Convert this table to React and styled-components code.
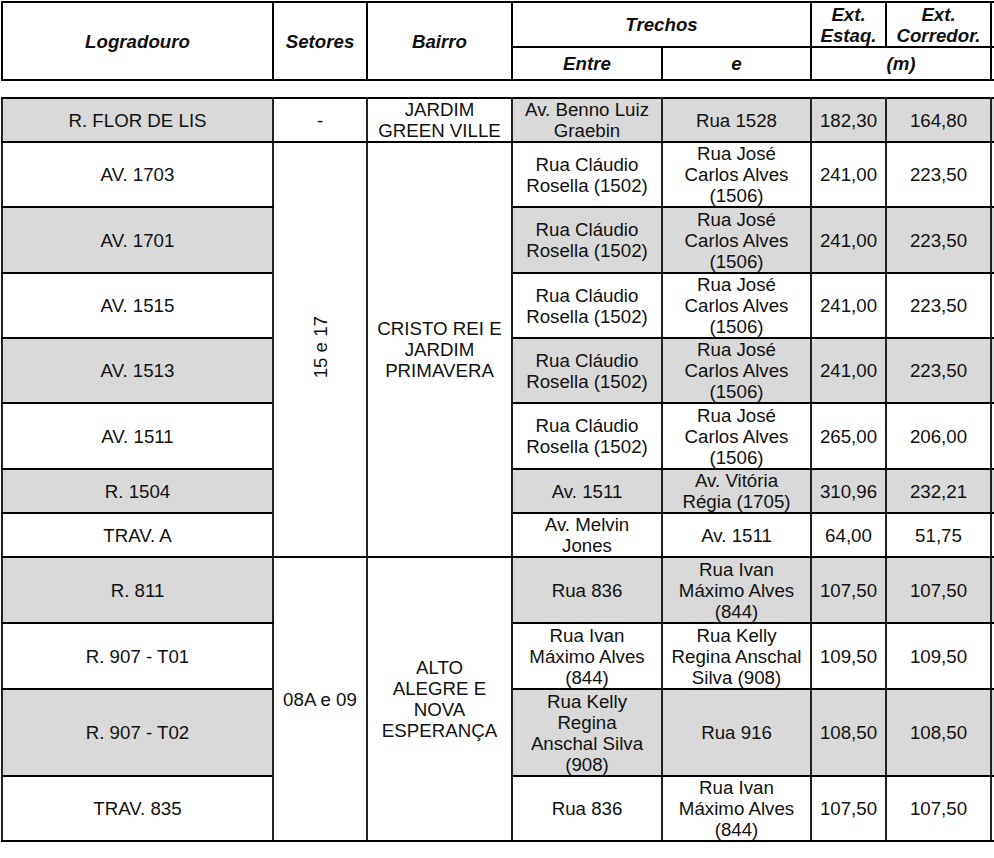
import React from 'react';
import styled, { createGlobalStyle } from 'styled-components';

const GlobalStyle = createGlobalStyle`
  html, body {
    margin: 0;
    padding: 0;
    background: #ffffff;
    overflow: hidden;
  }
  body {
    font-family: "Liberation Sans", Arial, sans-serif;
    color: #111111;
  }
`;

const Page = styled.div`
  width: 994px;
  height: 858px;
  overflow: hidden;
  box-sizing: border-box;
  padding: 1px 0 0 1px;
  display: flex;
  flex-direction: column;
  gap: 16px;
`;

const Table = styled.table`
  border-collapse: collapse;
  table-layout: fixed;
  width: 1048px;
  font-size: 18.7px;
  line-height: 21px;
  flex: none;
`;

const Row = styled.tr`
  height: ${(p) => p.$h}px;
`;

const HeadCell = styled.th`
  border: 2px solid #000;
  padding: 0 1px;
  font-weight: bold;
  font-style: italic;
  text-align: center;
  vertical-align: middle;
  white-space: nowrap;
`;

const Cell = styled.td`
  border-top: 2px solid #000;
  border-bottom: 2px solid #000;
  border-left: 2px solid #222;
  border-right: 2px solid #222;
  padding: 0 1px;
  text-align: center;
  vertical-align: middle;
  white-space: nowrap;
  background: ${(p) => (p.$shade ? '#d9d9d9' : '#ffffff')};
`;

const Vertical = styled.span`
  display: inline-block;
  writing-mode: vertical-rl;
  transform: rotate(180deg);
`;

const widths = [271, 94, 145, 150, 149, 75, 105, 60];

const Cols = () => (
  <colgroup>
    {widths.map((w, i) => (
      <col key={i} style={{ width: w }} />
    ))}
  </colgroup>
);

const Lines = ({ lines }) =>
  lines.map((l, i) => (
    <React.Fragment key={i}>
      {i > 0 && <br />}
      {l}
    </React.Fragment>
  ));

const jose = ['Rua José', 'Carlos Alves', '(1506)'];
const claudio = ['Rua Cláudio', 'Rosella (1502)'];
const ivan = ['Rua Ivan', 'Máximo Alves', '(844)'];

const rows = [
  {
    log: 'R. FLOR DE LIS',
    setor: { text: '-', span: 1 },
    bairro: { lines: ['JARDIM', 'GREEN VILLE'], span: 1 },
    entre: ['Av. Benno Luiz', 'Graebin'],
    e: ['Rua 1528'],
    est: '182,30',
    cor: '164,80',
    h: 43,
    shade: true,
  },
  {
    log: 'AV. 1703',
    setor: { text: '15 e 17', span: 7, vertical: true },
    bairro: { lines: ['CRISTO REI E', 'JARDIM', 'PRIMAVERA'], span: 7 },
    entre: claudio,
    e: jose,
    est: '241,00',
    cor: '223,50',
    h: 65,
  },
  { log: 'AV. 1701', entre: claudio, e: jose, est: '241,00', cor: '223,50', h: 66, shade: true },
  { log: 'AV. 1515', entre: claudio, e: jose, est: '241,00', cor: '223,50', h: 65 },
  { log: 'AV. 1513', entre: claudio, e: jose, est: '241,00', cor: '223,50', h: 65, shade: true },
  { log: 'AV. 1511', entre: claudio, e: jose, est: '265,00', cor: '206,00', h: 66 },
  {
    log: 'R. 1504',
    entre: ['Av. 1511'],
    e: ['Av. Vitória', 'Régia (1705)'],
    est: '310,96',
    cor: '232,21',
    h: 44,
    shade: true,
  },
  { log: 'TRAV. A', entre: ['Av. Melvin', 'Jones'], e: ['Av. 1511'], est: '64,00', cor: '51,75', h: 44 },
  {
    log: 'R. 811',
    setor: { text: '08A e 09', span: 4 },
    bairro: { lines: ['ALTO', 'ALEGRE E', 'NOVA', 'ESPERANÇA'], span: 4 },
    entre: ['Rua 836'],
    e: ivan,
    est: '107,50',
    cor: '107,50',
    h: 66,
    shade: true,
  },
  {
    log: 'R. 907 - T01',
    entre: ivan,
    e: ['Rua Kelly', 'Regina Anschal', 'Silva (908)'],
    est: '109,50',
    cor: '109,50',
    h: 66,
  },
  {
    log: 'R. 907 - T02',
    entre: ['Rua Kelly', 'Regina', 'Anschal Silva', '(908)'],
    e: ['Rua 916'],
    est: '108,50',
    cor: '108,50',
    h: 87,
    shade: true,
  },
  { log: 'TRAV. 835', entre: ['Rua 836'], e: ivan, est: '107,50', cor: '107,50', h: 64 },
];

export default function App() {
  return (
    <>
      <GlobalStyle />
      <Page>
        <Table>
          <Cols />
          <thead>
            <Row $h={45}>
              <HeadCell rowSpan={2}>Logradouro</HeadCell>
              <HeadCell rowSpan={2}>Setores</HeadCell>
              <HeadCell rowSpan={2}>Bairro</HeadCell>
              <HeadCell colSpan={2}>Trechos</HeadCell>
              <HeadCell>
                Ext.
                <br />
                Estaq.
              </HeadCell>
              <HeadCell>
                Ext.
                <br />
                Corredor.
              </HeadCell>
              <HeadCell />
            </Row>
            <Row $h={33}>
              <HeadCell>Entre</HeadCell>
              <HeadCell>e</HeadCell>
              <HeadCell colSpan={2}>(m)</HeadCell>
              <HeadCell />
            </Row>
          </thead>
        </Table>
        <Table>
          <Cols />
          <tbody>
            {rows.map((r, i) => (
              <Row key={i} $h={r.h}>
                <Cell $shade={r.shade}>{r.log}</Cell>
                {r.setor && (
                  <Cell rowSpan={r.setor.span}>
                    {r.setor.vertical ? <Vertical>{r.setor.text}</Vertical> : r.setor.text}
                  </Cell>
                )}
                {r.bairro && (
                  <Cell rowSpan={r.bairro.span}>
                    <Lines lines={r.bairro.lines} />
                  </Cell>
                )}
                <Cell $shade={r.shade}>
                  <Lines lines={r.entre} />
                </Cell>
                <Cell $shade={r.shade}>
                  <Lines lines={r.e} />
                </Cell>
                <Cell $shade={r.shade}>{r.est}</Cell>
                <Cell $shade={r.shade}>{r.cor}</Cell>
                <Cell $shade={r.shade} />
              </Row>
            ))}
          </tbody>
        </Table>
      </Page>
    </>
  );
}
